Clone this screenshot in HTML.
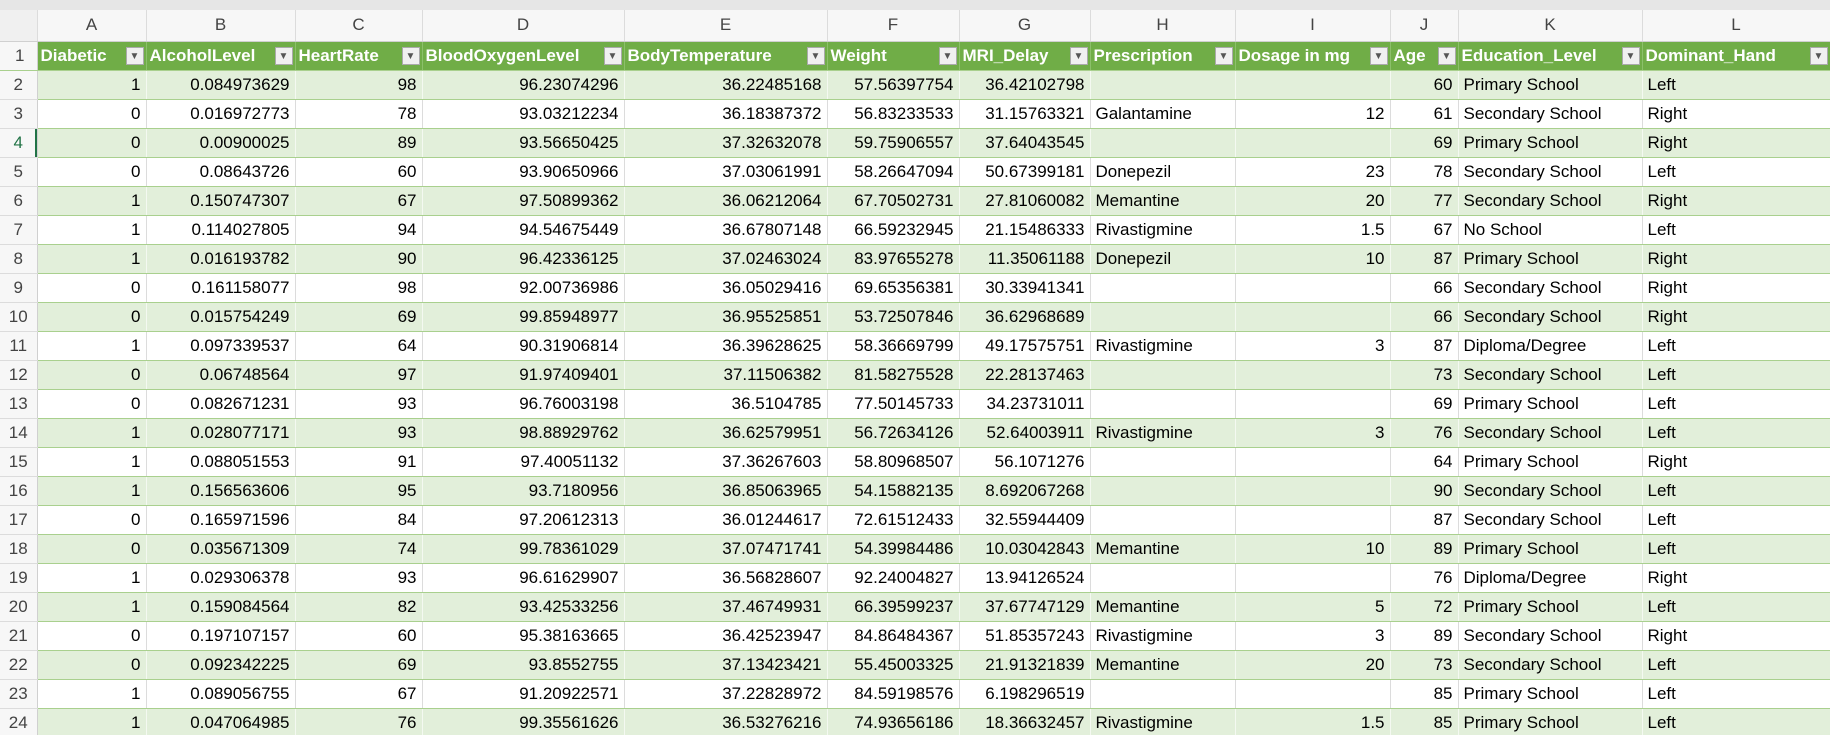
<!DOCTYPE html>
<html><head><meta charset="utf-8">
<style>
html,body{margin:0;padding:0;background:#fff;overflow:hidden}
body{width:1830px;height:735px;position:relative;font-family:"Liberation Sans",Arial,sans-serif}
.top{position:absolute;left:0;top:0;width:1830px;height:10px;background:#e6e6e6}
table{position:absolute;left:0;top:10px;border-collapse:collapse;table-layout:fixed;width:1830px}
td{height:29px;padding:0 5px;font-size:17px;color:#000;white-space:nowrap;overflow:hidden;border-right:1px solid #dcdcdc;border-bottom:1px solid #a9d08e;text-align:right;box-sizing:border-box}
tr.ch td{height:31px;background:#f7f7f7;color:#444;text-align:center;font-size:17px;border-bottom:1px solid #d0d0d0;border-right:1px solid #dcdcdc}
td.rh{background:#f7f7f7;color:#444;text-align:center;padding:0;border-right:1px solid #d0d0d0;border-bottom:1px solid #dcdcdc}
tr.h td{background:#70ad47;color:#fff;font-weight:bold;text-align:left;position:relative;padding-left:3px;border-right:1px solid #8cc06a;border-bottom:1px solid #a9d08e}
tr.h td.rh{background:#f7f7f7;color:#444;font-weight:normal;text-align:center;border-right:1px solid #d0d0d0}
tr.h td span.f{position:absolute;right:2px;top:5px;width:18px;height:18px;background:#f0f0f0;border:1px solid #aaa;box-sizing:border-box;color:#555;font-size:10px;line-height:17px;text-align:center;font-weight:normal}
tr.g td{background:#e2efda;border-right:1px solid #f4f9f1}
tr.w td{background:#fff}
tr.g td.rh,tr.w td.rh{background:#f7f7f7;border-right:1px solid #d0d0d0}
td.l{text-align:left}
</style></head><body>
<div class="top"></div>
<table>
<colgroup><col style="width:37px"><col style="width:109px"><col style="width:149px"><col style="width:127px"><col style="width:202px"><col style="width:203px"><col style="width:132px"><col style="width:131px"><col style="width:145px"><col style="width:155px"><col style="width:68px"><col style="width:184px"><col style="width:188px"></colgroup>
<tr class="ch"><td style="background:#f0f0f0"></td><td>A</td><td>B</td><td>C</td><td>D</td><td>E</td><td>F</td><td>G</td><td>H</td><td>I</td><td>J</td><td>K</td><td>L</td></tr>
<tr class="h"><td class="rh">1</td><td>Diabetic<span class="f">▼</span></td><td>AlcoholLevel<span class="f">▼</span></td><td>HeartRate<span class="f">▼</span></td><td>BloodOxygenLevel<span class="f">▼</span></td><td>BodyTemperature<span class="f">▼</span></td><td>Weight<span class="f">▼</span></td><td>MRI_Delay<span class="f">▼</span></td><td>Prescription<span class="f">▼</span></td><td>Dosage in mg<span class="f">▼</span></td><td>Age<span class="f">▼</span></td><td>Education_Level<span class="f">▼</span></td><td>Dominant_Hand<span class="f">▼</span></td></tr>
<tr class="g"><td class="rh">2</td><td>1</td><td>0.084973629</td><td>98</td><td>96.23074296</td><td>36.22485168</td><td>57.56397754</td><td>36.42102798</td><td class="l"></td><td></td><td>60</td><td class="l">Primary School</td><td class="l">Left</td></tr>
<tr class="w"><td class="rh">3</td><td>0</td><td>0.016972773</td><td>78</td><td>93.03212234</td><td>36.18387372</td><td>56.83233533</td><td>31.15763321</td><td class="l">Galantamine</td><td>12</td><td>61</td><td class="l">Secondary School</td><td class="l">Right</td></tr>
<tr class="g"><td class="rh" style="color:#217346;box-shadow:inset -2px 0 0 #217346">4</td><td>0</td><td>0.00900025</td><td>89</td><td>93.56650425</td><td>37.32632078</td><td>59.75906557</td><td>37.64043545</td><td class="l"></td><td></td><td>69</td><td class="l">Primary School</td><td class="l">Right</td></tr>
<tr class="w"><td class="rh">5</td><td>0</td><td>0.08643726</td><td>60</td><td>93.90650966</td><td>37.03061991</td><td>58.26647094</td><td>50.67399181</td><td class="l">Donepezil</td><td>23</td><td>78</td><td class="l">Secondary School</td><td class="l">Left</td></tr>
<tr class="g"><td class="rh">6</td><td>1</td><td>0.150747307</td><td>67</td><td>97.50899362</td><td>36.06212064</td><td>67.70502731</td><td>27.81060082</td><td class="l">Memantine</td><td>20</td><td>77</td><td class="l">Secondary School</td><td class="l">Right</td></tr>
<tr class="w"><td class="rh">7</td><td>1</td><td>0.114027805</td><td>94</td><td>94.54675449</td><td>36.67807148</td><td>66.59232945</td><td>21.15486333</td><td class="l">Rivastigmine</td><td>1.5</td><td>67</td><td class="l">No School</td><td class="l">Left</td></tr>
<tr class="g"><td class="rh">8</td><td>1</td><td>0.016193782</td><td>90</td><td>96.42336125</td><td>37.02463024</td><td>83.97655278</td><td>11.35061188</td><td class="l">Donepezil</td><td>10</td><td>87</td><td class="l">Primary School</td><td class="l">Right</td></tr>
<tr class="w"><td class="rh">9</td><td>0</td><td>0.161158077</td><td>98</td><td>92.00736986</td><td>36.05029416</td><td>69.65356381</td><td>30.33941341</td><td class="l"></td><td></td><td>66</td><td class="l">Secondary School</td><td class="l">Right</td></tr>
<tr class="g"><td class="rh">10</td><td>0</td><td>0.015754249</td><td>69</td><td>99.85948977</td><td>36.95525851</td><td>53.72507846</td><td>36.62968689</td><td class="l"></td><td></td><td>66</td><td class="l">Secondary School</td><td class="l">Right</td></tr>
<tr class="w"><td class="rh">11</td><td>1</td><td>0.097339537</td><td>64</td><td>90.31906814</td><td>36.39628625</td><td>58.36669799</td><td>49.17575751</td><td class="l">Rivastigmine</td><td>3</td><td>87</td><td class="l">Diploma/Degree</td><td class="l">Left</td></tr>
<tr class="g"><td class="rh">12</td><td>0</td><td>0.06748564</td><td>97</td><td>91.97409401</td><td>37.11506382</td><td>81.58275528</td><td>22.28137463</td><td class="l"></td><td></td><td>73</td><td class="l">Secondary School</td><td class="l">Left</td></tr>
<tr class="w"><td class="rh">13</td><td>0</td><td>0.082671231</td><td>93</td><td>96.76003198</td><td>36.5104785</td><td>77.50145733</td><td>34.23731011</td><td class="l"></td><td></td><td>69</td><td class="l">Primary School</td><td class="l">Left</td></tr>
<tr class="g"><td class="rh">14</td><td>1</td><td>0.028077171</td><td>93</td><td>98.88929762</td><td>36.62579951</td><td>56.72634126</td><td>52.64003911</td><td class="l">Rivastigmine</td><td>3</td><td>76</td><td class="l">Secondary School</td><td class="l">Left</td></tr>
<tr class="w"><td class="rh">15</td><td>1</td><td>0.088051553</td><td>91</td><td>97.40051132</td><td>37.36267603</td><td>58.80968507</td><td>56.1071276</td><td class="l"></td><td></td><td>64</td><td class="l">Primary School</td><td class="l">Right</td></tr>
<tr class="g"><td class="rh">16</td><td>1</td><td>0.156563606</td><td>95</td><td>93.7180956</td><td>36.85063965</td><td>54.15882135</td><td>8.692067268</td><td class="l"></td><td></td><td>90</td><td class="l">Secondary School</td><td class="l">Left</td></tr>
<tr class="w"><td class="rh">17</td><td>0</td><td>0.165971596</td><td>84</td><td>97.20612313</td><td>36.01244617</td><td>72.61512433</td><td>32.55944409</td><td class="l"></td><td></td><td>87</td><td class="l">Secondary School</td><td class="l">Left</td></tr>
<tr class="g"><td class="rh">18</td><td>0</td><td>0.035671309</td><td>74</td><td>99.78361029</td><td>37.07471741</td><td>54.39984486</td><td>10.03042843</td><td class="l">Memantine</td><td>10</td><td>89</td><td class="l">Primary School</td><td class="l">Left</td></tr>
<tr class="w"><td class="rh">19</td><td>1</td><td>0.029306378</td><td>93</td><td>96.61629907</td><td>36.56828607</td><td>92.24004827</td><td>13.94126524</td><td class="l"></td><td></td><td>76</td><td class="l">Diploma/Degree</td><td class="l">Right</td></tr>
<tr class="g"><td class="rh">20</td><td>1</td><td>0.159084564</td><td>82</td><td>93.42533256</td><td>37.46749931</td><td>66.39599237</td><td>37.67747129</td><td class="l">Memantine</td><td>5</td><td>72</td><td class="l">Primary School</td><td class="l">Left</td></tr>
<tr class="w"><td class="rh">21</td><td>0</td><td>0.197107157</td><td>60</td><td>95.38163665</td><td>36.42523947</td><td>84.86484367</td><td>51.85357243</td><td class="l">Rivastigmine</td><td>3</td><td>89</td><td class="l">Secondary School</td><td class="l">Right</td></tr>
<tr class="g"><td class="rh">22</td><td>0</td><td>0.092342225</td><td>69</td><td>93.8552755</td><td>37.13423421</td><td>55.45003325</td><td>21.91321839</td><td class="l">Memantine</td><td>20</td><td>73</td><td class="l">Secondary School</td><td class="l">Left</td></tr>
<tr class="w"><td class="rh">23</td><td>1</td><td>0.089056755</td><td>67</td><td>91.20922571</td><td>37.22828972</td><td>84.59198576</td><td>6.198296519</td><td class="l"></td><td></td><td>85</td><td class="l">Primary School</td><td class="l">Left</td></tr>
<tr class="g"><td class="rh">24</td><td>1</td><td>0.047064985</td><td>76</td><td>99.35561626</td><td>36.53276216</td><td>74.93656186</td><td>18.36632457</td><td class="l">Rivastigmine</td><td>1.5</td><td>85</td><td class="l">Primary School</td><td class="l">Left</td></tr>
</table>
</body></html>
